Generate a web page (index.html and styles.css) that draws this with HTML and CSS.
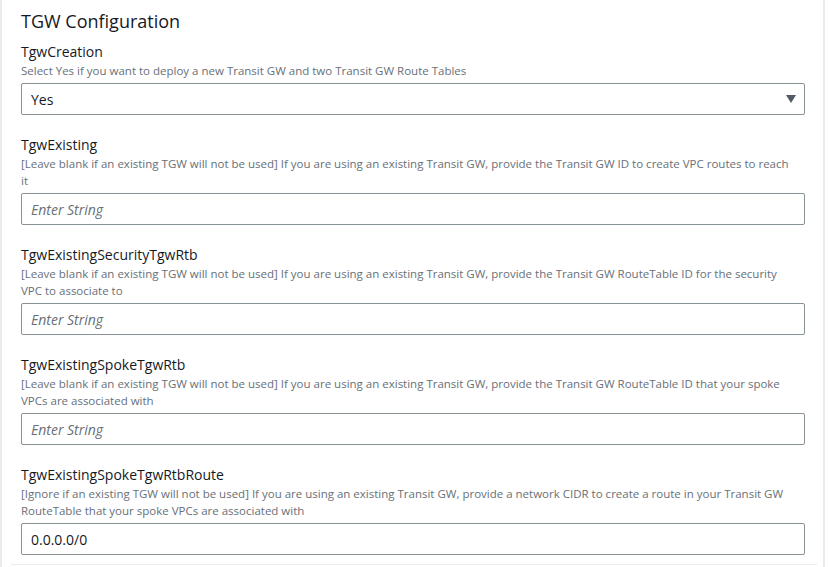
FILE: index.html
```html
<!DOCTYPE html>
<html lang="en">
<head>
<meta charset="utf-8">
<title>TGW Configuration</title>
<link rel="stylesheet" href="styles.css">
</head>
<body>
<div class="panel">
  <h2 class="title">TGW Configuration</h2>
  <div class="fields">
    <div class="field">
      <div class="label">TgwCreation</div>
      <div class="desc">Select Yes if you want to deploy a new Transit GW and two Transit GW Route Tables</div>
      <div class="control select">
        <span class="value">Yes</span>
        <svg class="caret" width="10" height="8" viewBox="0 0 10 8"><path d="M0 0 H10 L5 8 Z" fill="#545b64"/></svg>
      </div>
    </div>
    <div class="field">
      <div class="label">TgwExisting</div>
      <div class="desc">[Leave blank if an existing TGW will not be used] If you are using an existing Transit GW, provide the Transit GW ID to create VPC routes to reach<br>it</div>
      <div class="control"><span class="placeholder">Enter String</span></div>
    </div>
    <div class="field">
      <div class="label">TgwExistingSecurityTgwRtb</div>
      <div class="desc">[Leave blank if an existing TGW will not be used] If you are using an existing Transit GW, provide the Transit GW RouteTable ID for the security<br>VPC to associate to</div>
      <div class="control"><span class="placeholder">Enter String</span></div>
    </div>
    <div class="field">
      <div class="label">TgwExistingSpokeTgwRtb</div>
      <div class="desc">[Leave blank if an existing TGW will not be used] If you are using an existing Transit GW, provide the Transit GW RouteTable ID that your spoke<br>VPCs are associated with</div>
      <div class="control"><span class="placeholder">Enter String</span></div>
    </div>
    <div class="field">
      <div class="label">TgwExistingSpokeTgwRtbRoute</div>
      <div class="desc">[Ignore if an existing TGW will not be used] If you are using an existing Transit GW, provide a network CIDR to create a route in your Transit GW<br>RouteTable that your spoke VPCs are associated with</div>
      <div class="control"><span class="value">0.0.0.0/0</span></div>
    </div>
  </div>
  <div class="divider"></div>
</div>
</body>
</html>
```

FILE: styles.css
```css
html, body {
  margin: 0;
  padding: 0;
  background: #ffffff;
}

body {
  width: 828px;
  height: 567px;
  overflow: hidden;
  font-family: "Open Sans", "Noto Sans", "Liberation Sans", sans-serif;
  color: #16191f;
}

.panel {
  width: 821px;
  border-left: 2px solid #e9ebed;
  border-right: 2px solid #e9ebed;
  padding-top: 8px;
  min-height: 580px;
  box-sizing: content-box;
}

.title {
  margin: 0 18px 8px 19px;
  font-size: 18px;
  line-height: 26px;
  font-weight: 400;
  color: #16191f;
}

.fields {
  display: flex;
  flex-direction: column;
  gap: 20px;
  padding: 0 18px 0 19px;
}

.field {
  display: flex;
  flex-direction: column;
}

.label {
  font-size: 14px;
  line-height: 20px;
  color: #16191f;
}

.desc {
  font-size: 11.5px;
  line-height: 17px;
  color: #687078;
  margin-bottom: 4px;
}

.control {
  height: 32px;
  box-sizing: border-box;
  border: 1px solid #879196;
  border-radius: 2px;
  display: flex;
  align-items: center;
  padding: 0 9px;
  font-size: 14px;
}

.select {
  justify-content: space-between;
  padding-right: 8px;
}

.value {
  color: #16191f;
}

.placeholder {
  color: #687078;
  font-style: italic;
}

.divider {
  height: 1px;
  background: #e9ebed;
  margin: 9px 6px 0 9px;
}
```
